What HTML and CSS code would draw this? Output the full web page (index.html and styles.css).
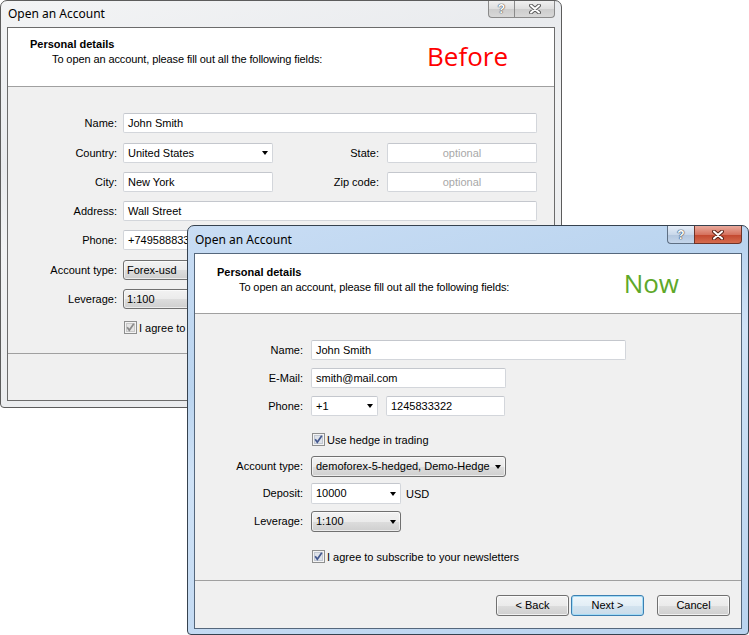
FILE: index.html
```html
<!DOCTYPE html>
<html>
<head>
  <title>Open an Account</title>
  <link rel="stylesheet" href="styles.css">
</head>
<body>
  <div class="desk">

    <!-- old dialog, inactive -->
    <div class="window win-before">
      <div class="titlebar">
        <span class="title">Open an Account</span>
        <div class="caps">
          <span class="cap cap-help">?</span>
          <span class="cap cap-close">
            <svg width="12" height="10" viewBox="0 0 12 10"><path d="M2 1.5 L10 8.5 M10 1.5 L2 8.5" stroke="#5c5c5c" stroke-width="4" stroke-linecap="round"/><path d="M2 1.5 L10 8.5 M10 1.5 L2 8.5" stroke="#fff" stroke-width="2" stroke-linecap="round"/></svg>
          </span>
        </div>
      </div>
      <div class="client">
        <div class="header">
          <div class="head-text">
            <div class="head-title">Personal details</div>
            <div class="head-sub">To open an account, please fill out all the following fields:</div>
          </div>
          <div class="tag tag-before">Before</div>
        </div>
        <div class="body">
          <div class="form form-before">
            <div class="lbl">Name:</div>
            <div class="row"><div class="input w-414">John Smith</div></div>

            <div class="lbl">Country:</div>
            <div class="row">
              <div class="input combo w-150">United States<i class="arrow"></i></div>
              <div class="sublbl">State:</div>
              <div class="input hint w-150">optional</div>
            </div>

            <div class="lbl">City:</div>
            <div class="row">
              <div class="input w-150">New York</div>
              <div class="sublbl">Zip code:</div>
              <div class="input hint w-150">optional</div>
            </div>

            <div class="lbl">Address:</div>
            <div class="row"><div class="input w-414">Wall Street</div></div>

            <div class="lbl">Phone:</div>
            <div class="row"><div class="input w-414">+74958883322</div></div>

            <div class="lbl">Account type:</div>
            <div class="row"><div class="dd w-150">Forex-usd<i class="arrow"></i></div></div>

            <div class="lbl">Leverage:</div>
            <div class="row"><div class="dd w-150">1:100<i class="arrow"></i></div></div>

            <div></div>
            <div class="check-row">
              <svg class="check" width="13" height="13" viewBox="0 0 13 13"><rect x="0.5" y="0.5" width="12" height="12" fill="#f3f3f3" stroke="#8e8f8f"/><rect x="2.5" y="2.5" width="8" height="8" fill="#e4e4e4" stroke="#c8c8c8"/><path d="M3.2 6.2 L5.3 9.2 L9.8 2.8" fill="none" stroke="#8a8a8a" stroke-width="1.7"/></svg>
              <span>I agree to</span>
            </div>
          </div>
        </div>
        <div class="footer"></div>
      </div>
    </div>

    <!-- new dialog, active -->
    <div class="window win-now">
      <div class="titlebar">
        <span class="title">Open an Account</span>
        <div class="caps">
          <span class="cap cap-help">?</span>
          <span class="cap cap-close">
            <svg width="12" height="10" viewBox="0 0 12 10"><path d="M2 1.5 L10 8.5 M10 1.5 L2 8.5" stroke="#5a2418" stroke-width="4" stroke-linecap="round"/><path d="M2 1.5 L10 8.5 M10 1.5 L2 8.5" stroke="#fff" stroke-width="2" stroke-linecap="round"/></svg>
          </span>
        </div>
      </div>
      <div class="client">
        <div class="header">
          <div class="head-text">
            <div class="head-title">Personal details</div>
            <div class="head-sub">To open an account, please fill out all the following fields:</div>
          </div>
          <div class="tag tag-now">Now</div>
        </div>
        <div class="body">
          <div class="form form-now">
            <div class="lbl">Name:</div>
            <div class="row"><div class="input w-315">John Smith</div></div>

            <div class="lbl">E-Mail:</div>
            <div class="row"><div class="input w-195">smith@mail.com</div></div>

            <div class="lbl">Phone:</div>
            <div class="row">
              <div class="input combo w-67">+1<i class="arrow"></i></div>
              <div class="input w-119 gap-left">1245833322</div>
            </div>

            <div></div>
            <div class="check-row">
              <svg class="check" width="13" height="13" viewBox="0 0 13 13"><rect x="0.5" y="0.5" width="12" height="12" fill="#f4f4f4" stroke="#8e8f8f"/><rect x="2.5" y="2.5" width="8" height="8" fill="#dfe3ea" stroke="#c2c8d2"/><path d="M3.2 6.2 L5.3 9.2 L9.8 2.8" fill="none" stroke="#44598f" stroke-width="1.7"/></svg>
              <span>Use hedge in trading</span>
            </div>

            <div class="lbl lbl-dd">Account type:</div>
            <div class="row"><div class="dd w-195">demoforex-5-hedged, Demo-Hedge<i class="arrow"></i></div></div>

            <div class="lbl lbl-dd">Deposit:</div>
            <div class="row">
              <div class="input combo tall w-90">10000<i class="arrow"></i></div>
              <span class="unit">USD</span>
            </div>

            <div class="lbl lbl-dd">Leverage:</div>
            <div class="row"><div class="dd w-90">1:100<i class="arrow"></i></div></div>

            <div></div>
            <div class="check-row">
              <svg class="check" width="13" height="13" viewBox="0 0 13 13"><rect x="0.5" y="0.5" width="12" height="12" fill="#f4f4f4" stroke="#8e8f8f"/><rect x="2.5" y="2.5" width="8" height="8" fill="#dfe3ea" stroke="#c2c8d2"/><path d="M3.2 6.2 L5.3 9.2 L9.8 2.8" fill="none" stroke="#44598f" stroke-width="1.7"/></svg>
              <span>I agree to subscribe to your newsletters</span>
            </div>
          </div>
        </div>
        <div class="footer">
          <div class="btn">&lt; Back</div>
          <div class="btn btn-default">Next &gt;</div>
          <div class="btn btn-cancel">Cancel</div>
        </div>
      </div>
    </div>

  </div>
</body>
</html>
```

FILE: styles.css
```css
body {
  margin: 0;
  background-color: #fff;
  color: #000;
  font-family: "Liberation Sans", Arial, sans-serif;
  font-size: 11px;
}

/* Desktop that holds the two dialogs */
.desk {
  position: relative;
  width: 749px;
  height: 635px;
  overflow: hidden;
}

/* Window frame */
.window {
  position: absolute;
  box-sizing: border-box;
  width: 562px;
  display: flex;
  flex-direction: column;
  padding: 0 6px 6px;
  border: 1px solid #3a4551;
  border-radius: 7px 7px 4px 4px;
}

.win-before {
  left: 0;
  top: 0;
  height: 408px;
  border-color: #5c5c5c;
  background: linear-gradient(165deg, #f3f4f5 0%, #e9ebee 30%, #f1f2f3 45%, #e6e8eb 100%);
}

.win-now {
  left: 187px;
  top: 225px;
  height: 410px;
  padding-bottom: 5px;
  border-color: #36424f;
  background: linear-gradient(165deg, #c9ddf4 0%, #bad4ef 30%, #cfe2f6 45%, #b9d3ef 100%);
}

/* Title bar */
.titlebar {
  height: 26px;
  display: flex;
  justify-content: space-between;
  align-items: flex-start;
}

.win-now .titlebar {
  height: 27px;
}

.title {
  font-family: "Noto Sans", "Open Sans", sans-serif;
  font-size: 12px;
  line-height: 16px;
  padding: 5px 0 0 1px;
}

.win-now .title {
  padding-top: 6px;
}

.caps {
  display: flex;
}

.cap {
  box-sizing: border-box;
  height: 17px;
  display: flex;
  align-items: center;
  justify-content: center;
  border: 1px solid #8a8a8a;
  border-top: none;
}

.cap-help {
  width: 26px;
  border-right: none;
  border-radius: 0 0 0 4px;
  color: #fff;
  font-weight: bold;
  font-size: 12px;
  text-shadow: 0 0 1px #555, 0 0 1px #555, 0 0 1px #555;
}

.cap-close {
  width: 41px;
  border-radius: 0 0 4px 0;
}

.win-before .cap {
  background: linear-gradient(#f0f0f0 0%, #dedede 50%, #cdcdcd 51%, #d8d8d8 100%);
}

.win-now .cap {
  height: 18px;
  border-color: #5e6f83;
}

.win-now .cap-help {
  width: 27px;
  background: linear-gradient(#e6eef8 0%, #c9d8ea 50%, #b2c6de 51%, #c5d6ea 100%);
  text-shadow: 0 0 1px #2f4056, 0 0 1px #2f4056, 0 0 1px #2f4056;
}

.win-now .cap-close {
  width: 48px;
  border-color: #6e3328;
  background: linear-gradient(#e9a99c 0%, #d6735f 50%, #c2462e 51%, #d56c4e 100%);
}

/* Client area */
.client {
  flex: 1;
  display: flex;
  flex-direction: column;
  border: 1px solid #6b6b6b;
  background-color: #f0f0f0;
}

.win-now .client {
  border-color: #55677c;
}

.header {
  height: 58px;
  display: flex;
  background-color: #fff;
  border-bottom: 1px solid #a0a0a0;
}

.win-now .header {
  height: 59px;
}

.head-text {
  padding: 9px 0 0 22px;
  line-height: 14px;
}

.win-now .head-text {
  padding-top: 11px;
}

.head-title {
  font-weight: bold;
}

.head-sub {
  margin-top: 1px;
  padding-left: 22px;
  letter-spacing: -0.1px;
}

.tag {
  margin-left: auto;
  font-family: "Open Sans", "Noto Sans", sans-serif;
  font-size: 26px;
  line-height: 30px;
  padding-top: 13px;
}

.tag-before {
  color: #ff0000;
  margin-right: 46px;
}

.tag-now {
  color: #5ea829;
  margin-right: 62px;
  padding-top: 14px;
}

.body {
  height: 266px;
}

/* Form grid: each row track is the pitch from one field to the next */
.form {
  display: grid;
  align-items: start;
  padding-top: 26px;
}

.form-before {
  grid-template-columns: 109px auto;
  grid-template-rows: 30px 29px 29px 29px 30px 29px 32px auto;
  column-gap: 6px;
}

.form-now {
  grid-template-columns: 108px auto;
  grid-template-rows: 28px 28px 37px 23px 27px 28px 39px auto;
  column-gap: 8px;
}

.lbl {
  text-align: right;
  white-space: nowrap;
  line-height: 20px;
}

.lbl-dd {
  line-height: 21px;
}

.row {
  display: flex;
  align-items: center;
}

.sublbl {
  width: 106px;
  margin-right: 8px;
  text-align: right;
}

/* Fields */
.input {
  position: relative;
  box-sizing: border-box;
  height: 20px;
  padding: 0 4px;
  line-height: 18px;
  white-space: nowrap;
  overflow: hidden;
  background-color: #fff;
  border: 1px solid #d3d6db;
  border-top-color: #c4c7cd;
  border-radius: 2px;
}

.hint {
  color: #a8a8a8;
  text-align: center;
}

.combo {
  padding-right: 16px;
}

.tall {
  height: 21px;
  line-height: 19px;
}

.dd {
  position: relative;
  box-sizing: border-box;
  height: 20px;
  padding: 0 16px 0 3px;
  line-height: 18px;
  white-space: nowrap;
  overflow: hidden;
  border: 1px solid #707070;
  border-radius: 3px;
  background: linear-gradient(#f2f2f2 0%, #ebebeb 50%, #dddddd 51%, #cfcfcf 100%);
  box-shadow: inset 0 0 0 1px rgba(255, 255, 255, 0.6);
}

.form-now .dd {
  height: 21px;
  line-height: 19px;
  padding-left: 4px;
}

.arrow {
  position: absolute;
  right: 4px;
  top: 50%;
  margin-top: -2px;
  width: 0;
  height: 0;
  border-left: 3.5px solid transparent;
  border-right: 3.5px solid transparent;
  border-top: 4px solid #000;
}

.w-67 { width: 67px; }
.w-90 { width: 90px; }
.w-119 { width: 119px; }
.w-150 { width: 150px; }
.w-195 { width: 195px; }
.w-315 { width: 315px; }
.w-414 { width: 414px; }

.gap-left {
  margin-left: 8px;
}

.unit {
  margin-left: 5px;
}

/* Checkboxes */
.check-row {
  display: flex;
  align-items: center;
  gap: 2px;
  padding-left: 1px;
  height: 13px;
  white-space: nowrap;
}

.check {
  flex: none;
}

/* Wizard buttons */
.footer {
  flex: 1;
  display: flex;
  justify-content: flex-end;
  align-items: flex-start;
  gap: 2px;
  padding: 14px 11px 0 0;
  border-top: 1px solid #a0a0a0;
}

.btn {
  box-sizing: border-box;
  width: 73px;
  height: 21px;
  line-height: 19px;
  text-align: center;
  border: 1px solid #707070;
  border-radius: 3px;
  background: linear-gradient(#f2f2f2 0%, #ebebeb 50%, #dddddd 51%, #cfcfcf 100%);
  box-shadow: inset 0 0 0 1px rgba(255, 255, 255, 0.7);
}

.btn-default {
  border-color: #3c7fb1;
  box-shadow: inset 0 0 0 1px #a4dcf6;
  background: linear-gradient(#eef6fb 0%, #e3eef6 50%, #d3e3ef 51%, #c9dcea 100%);
}

.btn-cancel {
  margin-left: 11px;
}
```
